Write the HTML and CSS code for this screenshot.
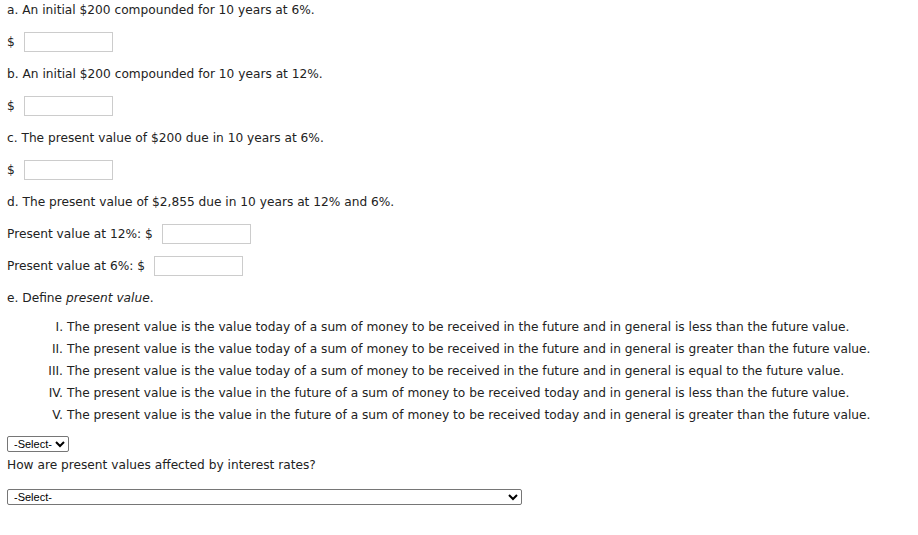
FILE: index.html
```html
<!DOCTYPE html>
<html>
<head>
<meta charset="utf-8">
<link rel="stylesheet" href="styles.css">
</head>
<body>
<div class="page">
  <div class="text-row">a. An initial $200 compounded for 10 years at 6%.</div>
  <div class="row"><span class="cur">$</span><input class="box" type="text"></div>
  <div class="text-row">b. An initial $200 compounded for 10 years at 12%.</div>
  <div class="row"><span class="cur">$</span><input class="box" type="text"></div>
  <div class="text-row">c. The present value of $200 due in 10 years at 6%.</div>
  <div class="row"><span class="cur">$</span><input class="box" type="text"></div>
  <div class="text-row">d. The present value of $2,855 due in 10 years at 12% and 6%.</div>
  <div class="row"><span class="lbl">Present value at 12%: $</span><input class="box" type="text"></div>
  <div class="row"><span class="lbl">Present value at 6%: $</span><input class="box" type="text"></div>
  <div class="text-row">e. Define <em>present value</em>.</div>
  <div class="choices">
    <span class="num">I.</span><span>The present value is the value today of a sum of money to be received in the future and in general is less than the future value.</span>
    <span class="num">II.</span><span>The present value is the value today of a sum of money to be received in the future and in general is greater than the future value.</span>
    <span class="num">III.</span><span>The present value is the value today of a sum of money to be received in the future and in general is equal to the future value.</span>
    <span class="num">IV.</span><span>The present value is the value in the future of a sum of money to be received today and in general is less than the future value.</span>
    <span class="num">V.</span><span>The present value is the value in the future of a sum of money to be received today and in general is greater than the future value.</span>
  </div>
  <div class="sel-wrap"><select class="sel sel-small"><option>-Select-</option></select></div>
  <div class="question">How are present values affected by interest rates?</div>
  <div class="sel-wrap"><select class="sel sel-wide"><option>-Select-</option></select></div>
</div>
</body>
</html>
```
FILE: styles.css
```css
html, body {
  margin: 0;
  padding: 0;
  background: #fff;
}
.page {
  padding: 0 7px;
  font-family: "DejaVu Sans", Verdana, sans-serif;
  font-size: 12.2px;
  color: #222;
}
.text-row {
  height: 20px;
  line-height: 21px;
  margin-bottom: 12px;
  white-space: nowrap;
}
.row {
  height: 20px;
  line-height: 20px;
  margin-bottom: 12px;
  display: flex;
  align-items: center;
  white-space: nowrap;
}
.cur {
  width: 17px;
}
.lbl {
  margin-right: 9px;
}
.box {
  box-sizing: border-box;
  width: 89px;
  height: 20px;
  border: 1px solid #ccc;
  margin: 0;
  padding: 0 3px;
  background: #fff;
}
.choices {
  display: grid;
  grid-template-columns: 56px auto;
  column-gap: 4px;
  line-height: 22px;
  margin-top: -4px;
  white-space: nowrap;
}
.num {
  text-align: right;
}
.sel-wrap {
  display: flex;
}
.sel {
  font-family: "Liberation Sans", Arial, sans-serif;
  font-size: 11px;
  height: 16px;
  box-sizing: border-box;
  border: 1px solid #767676;
  border-radius: 2px;
  background: #fff;
  color: #000;
  padding: 0 0 0 2px;
  margin: 0;
}
.sel-small {
  width: 62px;
  margin-top: 10px;
}
.sel-wide {
  width: 515px;
  margin-top: 14px;
}
.question {
  line-height: 20px;
  margin-top: 3px;
}
```
